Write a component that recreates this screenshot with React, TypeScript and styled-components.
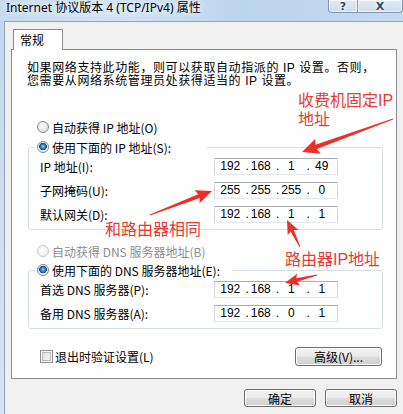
import React from "react";
import styled, { createGlobalStyle } from "styled-components";

const GlobalStyle = createGlobalStyle`
  html, body { margin: 0; padding: 0; background: #f0f0f0; }
  * { box-sizing: border-box; }
`;

const Window = styled.div`
  position: relative;
  width: 403px;
  height: 414px;
  overflow: hidden;
  display: flex;
  flex-direction: column;
  background: linear-gradient(180deg, #c0d6ed 0%, #c9dcef 25%, #d6e4f2 100%);
  font-family: "Noto Sans CJK SC", sans-serif;
  font-size: 12px;
  color: #000;
`;

const TitleBar = styled.div`
  height: 21px;
  flex: none;
  display: flex;
  align-items: flex-start;
  padding-left: 6px;
  background: linear-gradient(90deg, #c6dbf0 0%, #d3e3f3 30%, #bcd4ec 60%, #c4d9ee 100%);
`;

const Title = styled.div`
  font-family: "Noto Sans", "Noto Sans CJK SC", sans-serif;
  font-size: 12px;
  line-height: 15px;
  color: #000;
  white-space: nowrap;
  text-shadow: 0 0 6px rgba(255, 255, 255, 0.95), 0 0 10px rgba(255, 255, 255, 0.8);
`;

const CaptionGroup = styled.div`
  margin-left: auto;
  display: flex;
  height: 13px;
`;

const CaptionButton = styled.div<{ $w: number; $first?: boolean }>`
  width: ${(p) => p.$w}px;
  height: 13px;
  border: 1px solid #8596ac;
  border-top: none;
  border-left: ${(p) => (p.$first ? "1px solid #8596ac" : "none")};
  border-radius: ${(p) => (p.$first ? "0 0 0 4px" : "0 0 4px 0")};
  background: linear-gradient(180deg, #e2ebf5 0%, #cddcec 100%);
  box-shadow: inset 0 0 0 1px rgba(255, 255, 255, 0.55);
  display: flex;
  align-items: flex-end;
  justify-content: center;
  font-family: "DejaVu Sans", sans-serif;
  font-weight: bold;
  font-size: 11px;
  line-height: 11px;
  color: #34465e;
  text-shadow: 0 0 2px #fff, 0 0 3px #fff;
  overflow: hidden;
`;

const Body = styled.div`
  flex: 1;
  margin-left: 4px;
  background: #f0f0f0;
  border-top: 1px solid #8ea3bd;
  border-left: 1px solid #8ea3bd;
  padding: 7px 0 0 6px;
  display: flex;
  flex-direction: column;
`;

const TabStrip = styled.div`
  display: flex;
  padding-left: 2px;
  margin-bottom: -1px;
  position: relative;
  z-index: 1;
`;

const Tab = styled.div`
  width: 50px;
  height: 21px;
  border: 1px solid #898c95;
  border-bottom: none;
  background: #fff;
  padding-left: 6px;
  line-height: 19px;
  font-size: 12px;
`;

const Panel = styled.div`
  width: 386px;
  border: 1px solid #898c95;
  background: #fff;
  padding: 12px 14px 12px 16px;
  display: flex;
  flex-direction: column;
`;

const Description = styled.div`
  margin-left: -1px;
  font-family: "Liberation Sans", "Noto Sans CJK SC", sans-serif;
  font-size: 12px;
  line-height: 13px;
  letter-spacing: 0.6px;
  white-space: nowrap;
`;

const RadioRow = styled.div<{ $top: number; $disabled?: boolean }>`
  display: flex;
  align-items: center;
  gap: 3px;
  height: 16px;
  margin-top: ${(p) => p.$top}px;
  padding-left: 9px;
  color: ${(p) => (p.$disabled ? "#8d8d8d" : "#000")};
  white-space: nowrap;
`;

const Radio = styled.span<{ $checked?: boolean; $disabled?: boolean }>`
  flex: none;
  width: 12px;
  height: 12px;
  border-radius: 50%;
  border: 1px solid ${(p) => (p.$disabled ? "#c9c9c9" : "#8a8a8a")};
  background: ${(p) =>
    p.$checked
      ? "radial-gradient(circle at 50% 45%, #a9dcff 0px, #3f93dc 1.6px, #12539f 3.3px, #0e4a92 3.6px, #f6f6f6 4.1px, #dedede 100%)"
      : p.$disabled
      ? "radial-gradient(circle at 40% 40%, #fdfdfd 0%, #ececec 100%)"
      : "radial-gradient(circle at 40% 40%, #fbfbfb 0%, #d6d6d6 100%)"};
`;

const GroupBox = styled.fieldset<{ $top: number }>`
  margin: ${(p) => p.$top}px 0 0 0;
  width: 355px;
  min-inline-size: 0;
  border: 1px solid #d5dfe5;
  border-radius: 3px;
  padding: 3px 0 6px 0;
`;

const GroupLegend = styled.legend<{ $w: number }>`
  margin-left: 6px;
  padding: 0 0 0 2px;
  width: ${(p) => p.$w}px;
  height: 16px;
  display: flex;
  align-items: center;
  gap: 3px;
  white-space: nowrap;
  font-size: 12px;
`;

const FieldGrid = styled.div`
  display: grid;
  grid-template-columns: 174px 124px;
  row-gap: 7px;
  padding-left: 11px;
`;

const FieldLabel = styled.div`
  height: 17px;
  line-height: 17px;
  white-space: nowrap;
`;

const IpBox = styled.div`
  height: 17px;
  display: flex;
  border: 1px solid;
  border-color: #abadb3 #d3d6dc #e3e9ef #d3d6dc;
  background: #fff;
  font-family: "Liberation Sans", Arial, sans-serif;
  font-size: 12px;
  line-height: 15px;
`;

const Seg = styled.span`
  flex: 1;
  display: flex;
`;

const Dot = styled.span`
  width: 4px;
  flex: none;
`;

const Num = styled.span`
  flex: 1;
  text-align: center;
  padding-right: 4px;
`;

const BottomRow = styled.div`
  display: flex;
  align-items: center;
  height: 19px;
  margin-top: 18px;
  padding-left: 12px;
`;

const CheckBox = styled.span`
  width: 13px;
  height: 13px;
  flex: none;
  border: 1px solid #8f8f8f;
  background: linear-gradient(135deg, #d2d4d6 0%, #eceeef 60%, #f8f8f8 100%);
  box-shadow: inset 0 0 0 1px #f4f4f4, inset 0 0 0 2px #b6babe;
`;

const CheckLabel = styled.span`
  margin-left: 2px;
  white-space: nowrap;
`;

const Button = styled.div<{ $w: number; $h?: number }>`
  width: ${(p) => p.$w}px;
  height: ${(p) => p.$h ?? 18}px;
  border: 1px solid #707070;
  border-radius: 3px;
  background: linear-gradient(180deg, #f2f2f2 0%, #ebebeb 48%, #dddddd 52%, #cfcfcf 100%);
  box-shadow: inset 0 0 0 1px #fbfbfb;
  display: flex;
  align-items: center;
  justify-content: center;
  font-size: 12px;
  white-space: nowrap;
`;

const PushRight = styled.div`
  margin-left: auto;
`;

const Footer = styled.div`
  width: 386px;
  display: flex;
  justify-content: flex-end;
  gap: 9px;
  padding-top: 10px;
`;

const Overlay = styled.svg`
  position: absolute;
  left: 0;
  top: 0;
  width: 403px;
  height: 414px;
  pointer-events: none;
`;

const Note = styled.div<{ $x: number; $y: number }>`
  position: absolute;
  left: ${(p) => p.$x}px;
  top: ${(p) => p.$y}px;
  color: #e63a33;
  font-family: "Liberation Sans", "Noto Sans CJK SC", sans-serif;
  font-size: 16px;
  line-height: 19px;
  white-space: nowrap;
`;

function arrowPoints(
  tx: number,
  ty: number,
  hx: number,
  hy: number,
  headLen: number,
  headHalf: number,
  shaftHalf: number
): string {
  const dx = hx - tx;
  const dy = hy - ty;
  const L = Math.hypot(dx, dy);
  const ux = dx / L;
  const uy = dy / L;
  const nx = -uy;
  const ny = ux;
  const bx = hx - ux * headLen;
  const by = hy - uy * headLen;
  const wx = bx - ux * 2;
  const wy = by - uy * 2;
  const pts = [
    [tx + nx * 0.4, ty + ny * 0.4],
    [bx + nx * shaftHalf, by + ny * shaftHalf],
    [wx + nx * headHalf, wy + ny * headHalf],
    [hx, hy],
    [wx - nx * headHalf, wy - ny * headHalf],
    [bx - nx * shaftHalf, by - ny * shaftHalf],
    [tx - nx * 0.4, ty - ny * 0.4],
  ];
  return pts.map((p) => `${p[0].toFixed(1)},${p[1].toFixed(1)}`).join(" ");
}

const arrows = [
  { t: [393, 119], h: [302, 152], hl: 15, hw: 8, sw: 2.2 },
  { t: [150, 215], h: [212, 191], hl: 14, hw: 7, sw: 2 },
  { t: [300, 247], h: [287, 220], hl: 12, hw: 6, sw: 1.8 },
  { t: [317, 275], h: [285, 283], hl: 12, hw: 6, sw: 1.8 },
];

function Ip({ parts }: { parts: string[] }) {
  return (
    <IpBox>
      {parts.map((p, i) => (
        <Seg key={i}>
          <Dot>{i === 0 ? "" : "."}</Dot>
          <Num>{p}</Num>
        </Seg>
      ))}
    </IpBox>
  );
}

export default function App() {
  return (
    <>
      <GlobalStyle />
      <Window>
        <TitleBar>
          <Title>Internet 协议版本 4 (TCP/IPv4) 属性</Title>
          <CaptionGroup>
            <CaptionButton $w={30} $first>?</CaptionButton>
            <CaptionButton $w={45}>X</CaptionButton>
          </CaptionGroup>
        </TitleBar>
        <Body>
          <TabStrip>
            <Tab>常规</Tab>
          </TabStrip>
          <Panel>
            <Description>
              如果网络支持此功能，则可以获取自动指派的 IP 设置。否则，
              <br />
              您需要从网络系统管理员处获得适当的 IP 设置。
            </Description>
            <RadioRow $top={31}>
              <Radio />
              <span>自动获得 IP 地址(O)</span>
            </RadioRow>
            <GroupBox $top={4}>
              <GroupLegend $w={172}>
                <Radio $checked />
                <span>使用下面的 IP 地址(S):</span>
              </GroupLegend>
              <FieldGrid>
                <FieldLabel>IP 地址(I):</FieldLabel>
                <Ip parts={["192", "168", "1", "49"]} />
                <FieldLabel>子网掩码(U):</FieldLabel>
                <Ip parts={["255", "255", "255", "0"]} />
                <FieldLabel>默认网关(D):</FieldLabel>
                <Ip parts={["192", "168", "1", "1"]} />
              </FieldGrid>
            </GroupBox>
            <RadioRow $top={13} $disabled>
              <Radio $disabled />
              <span>自动获得 DNS 服务器地址(B)</span>
            </RadioRow>
            <GroupBox $top={3}>
              <GroupLegend $w={197}>
                <Radio $checked />
                <span>使用下面的 DNS 服务器地址(E):</span>
              </GroupLegend>
              <FieldGrid>
                <FieldLabel>首选 DNS 服务器(P):</FieldLabel>
                <Ip parts={["192", "168", "1", "1"]} />
                <FieldLabel>备用 DNS 服务器(A):</FieldLabel>
                <Ip parts={["192", "168", "0", "1"]} />
              </FieldGrid>
            </GroupBox>
            <BottomRow>
              <CheckBox />
              <CheckLabel>退出时验证设置(L)</CheckLabel>
              <PushRight>
                <Button $w={87} $h={19}>高级(V)...</Button>
              </PushRight>
            </BottomRow>
          </Panel>
          <Footer>
            <Button $w={72}>确定</Button>
            <Button $w={72}>取消</Button>
          </Footer>
        </Body>
        <Overlay viewBox="0 0 403 414">
          {arrows.map((a, i) => (
            <polygon
              key={i}
              points={arrowPoints(a.t[0], a.t[1], a.h[0], a.h[1], a.hl, a.hw, a.sw)}
              fill="#ee2e28"
            />
          ))}
        </Overlay>
        <Note $x={298} $y={91}>
          收费机固定IP
          <br />
          地址
        </Note>
        <Note $x={105} $y={220}>和路由器相同</Note>
        <Note $x={285} $y={250}>路由器IP地址</Note>
      </Window>
    </>
  );
}
